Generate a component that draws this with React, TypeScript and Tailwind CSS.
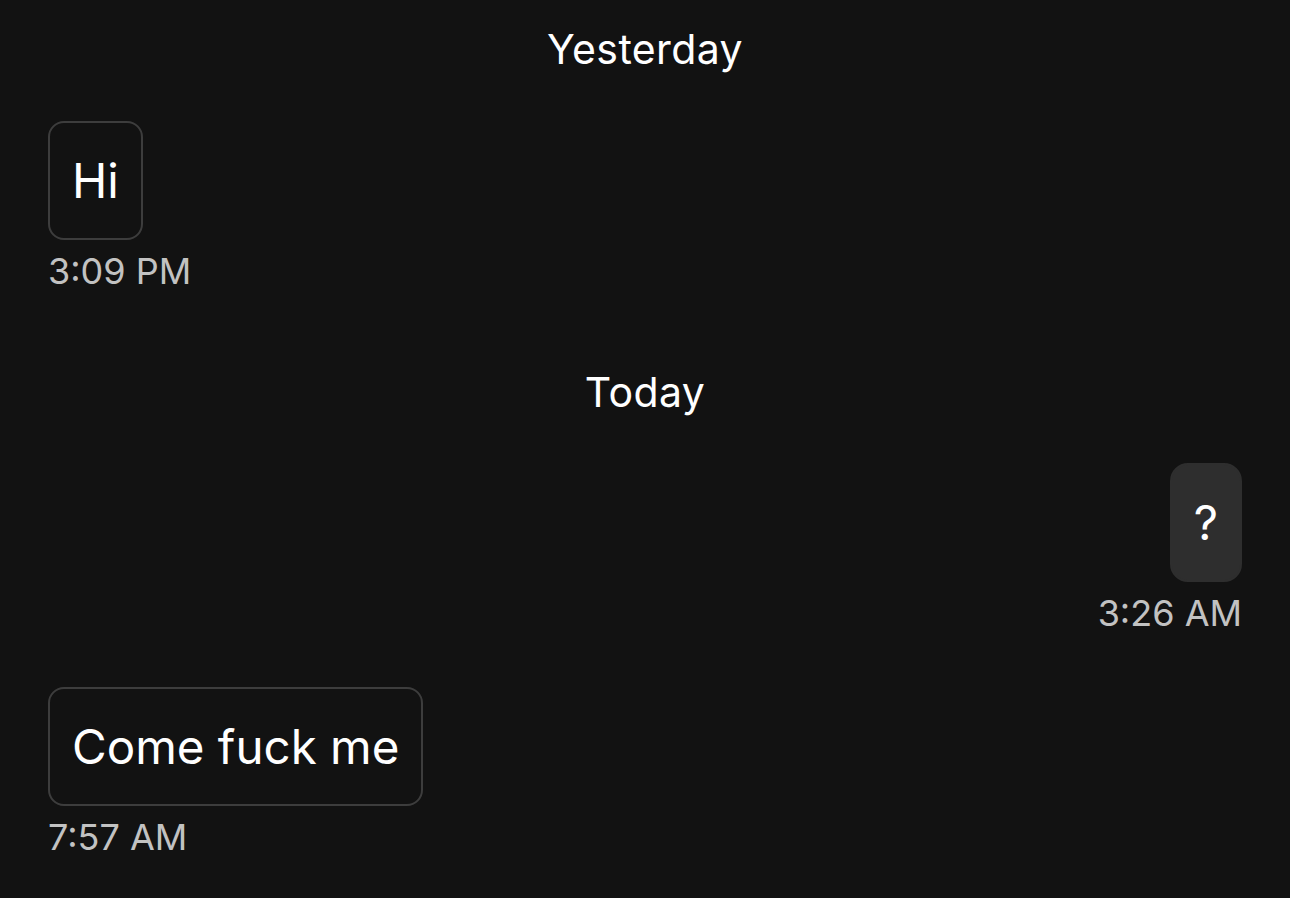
const font = { fontFamily: "Inter, 'Noto Sans', sans-serif" };

type Msg = { text: string; time: string; mine?: boolean };

function DayLabel({ label, className = "" }: { label: string; className?: string }) {
  return (
    <div className={`text-center text-[41px] leading-[48px] tracking-[0.4px] text-white ${className}`}>
      {label}
    </div>
  );
}

function Bubble({ msg, className = "" }: { msg: Msg; className?: string }) {
  return (
    <div className={`flex flex-col ${msg.mine ? "items-end" : "items-start"} ${className}`}>
      <div
        className={
          msg.mine
            ? "rounded-[18px] border-2 border-[#2e2e2e] bg-[#2e2e2e] px-[22px] py-[31px] text-[47.5px] leading-[53px] text-white"
            : "rounded-[16px] border-2 border-[#3d3d3d] bg-[#121212] px-[22px] py-[31px] text-[47.5px] leading-[53px] text-white"
        }
      >
        {msg.text}
      </div>
      <div className="mt-[13px] text-[36px] leading-[36px] text-[#c2c2c2]">{msg.time}</div>
    </div>
  );
}

export default function App() {
  return (
    <div className="min-h-[898px] w-full bg-[#121212] px-[48px] pt-[25px]" style={font}>
      <DayLabel label="Yesterday" />
      <Bubble className="mt-[48px]" msg={{ text: "Hi", time: "3:09 PM" }} />
      <DayLabel label="Today" className="mt-[79px]" />
      <Bubble className="mt-[47px]" msg={{ text: "?", time: "3:26 AM", mine: true }} />
      <Bubble className="mt-[56px]" msg={{ text: "Come fuck me", time: "7:57 AM" }} />
    </div>
  );
}
